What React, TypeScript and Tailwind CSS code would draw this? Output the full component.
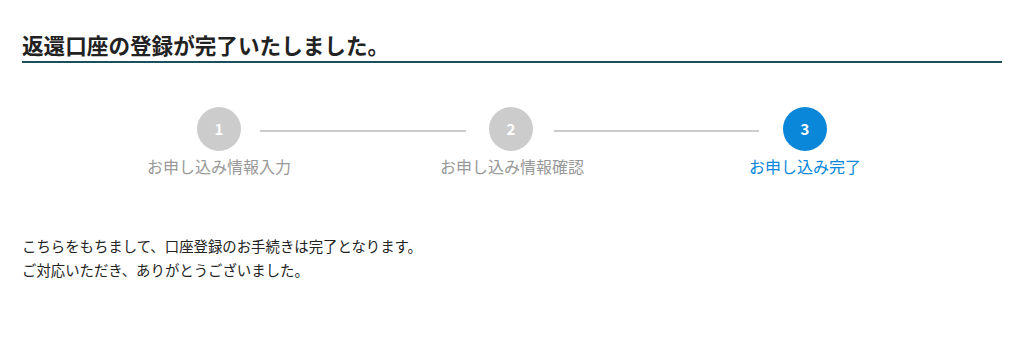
const steps = [
  { no: 1, label: 'お申し込み情報入力', active: false },
  { no: 2, label: 'お申し込み情報確認', active: false },
  { no: 3, label: 'お申し込み完了', active: true },
];

function StepCircle({ no, active }: { no: number; active: boolean }) {
  return (
    <div
      className={`flex h-[44px] w-[44px] shrink-0 items-center justify-center rounded-full text-[15px] font-bold text-white ${
        active ? 'bg-[#0a87d8]' : 'bg-[#cccccc]'
      }`}
    >
      {no}
    </div>
  );
}

export default function App() {
  return (
    <main
      className="min-h-[339px] bg-white px-[22px] text-[#222222]"
      style={{ fontFamily: '"Noto Sans CJK JP", "Noto Sans", sans-serif' }}
    >
      <h1 className="border-b-2 border-[#1a505e] pt-[32px] pb-[3px] text-[21.6px] font-bold leading-[26px] text-[#222222]">
        返還口座の登録が完了いたしました。
      </h1>

      <section className="pt-[43px]">
        <div className="flex items-center justify-center pt-[1px]">
          <StepCircle no={1} active={false} />
          <div className="ml-[19px] mr-[23px] mt-[3px] h-[2px] w-[206px] bg-[#cccccc]" />
          <StepCircle no={2} active={false} />
          <div className="ml-[21px] mr-[24px] mt-[3px] h-[2px] w-[205px] bg-[#cccccc]" />
          <StepCircle no={3} active />
        </div>
        <div className="mt-[3px] flex justify-center">
          {steps.map((step) => (
            <div
              key={step.no}
              className={`w-[293px] text-center text-[16px] leading-[24px] ${
                step.active ? 'text-[#0a87d8]' : 'text-[#999999]'
              }`}
            >
              {step.label}
            </div>
          ))}
        </div>
      </section>

      <div className="pt-[56px] text-[14.4px] leading-[24px] text-[#222222]">
        <p>こちらをもちまして、口座登録のお手続きは完了となります。</p>
        <p>ご対応いただき、ありがとうございました。</p>
      </div>
    </main>
  );
}
